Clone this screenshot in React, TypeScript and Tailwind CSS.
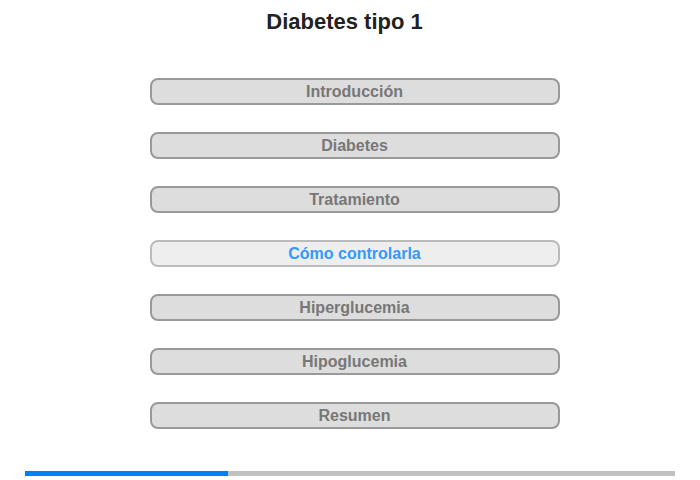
const sections = [
  "Introducción",
  "Diabetes",
  "Tratamiento",
  "Cómo controlarla",
  "Hiperglucemia",
  "Hipoglucemia",
  "Resumen",
];

const active = 3;

export default function App() {
  return (
    <div className="w-[700px] h-[480px] bg-white font-['Liberation_Sans',Arial,sans-serif] flex flex-col items-center">
      <h1 className="mt-[9px] mr-[11px] text-[22px] leading-[26px] font-bold text-[#222]">
        Diabetes tipo 1
      </h1>
      <nav className="mt-[43px] ml-[9px] flex flex-col gap-[27px]">
        {sections.map((label, idx) => (
          <button
            key={label}
            className={
              idx === active
                ? "w-[410px] h-[27px] rounded-[8px] border-2 border-[#bbbbbb] bg-[#eeeeee] text-[16px] font-bold text-[#3399ff] leading-[23px]"
                : "w-[410px] h-[27px] rounded-[8px] border-2 border-[#999999] bg-[#dddddd] text-[16px] font-bold text-[#777777] leading-[23px]"
            }
          >
            {label}
          </button>
        ))}
      </nav>
      <div className="mt-[42px] w-[650px] h-[5px] bg-[#c0c0c0] flex">
        <div className="w-[203px] h-full bg-[#0080ff]" />
      </div>
    </div>
  );
}
